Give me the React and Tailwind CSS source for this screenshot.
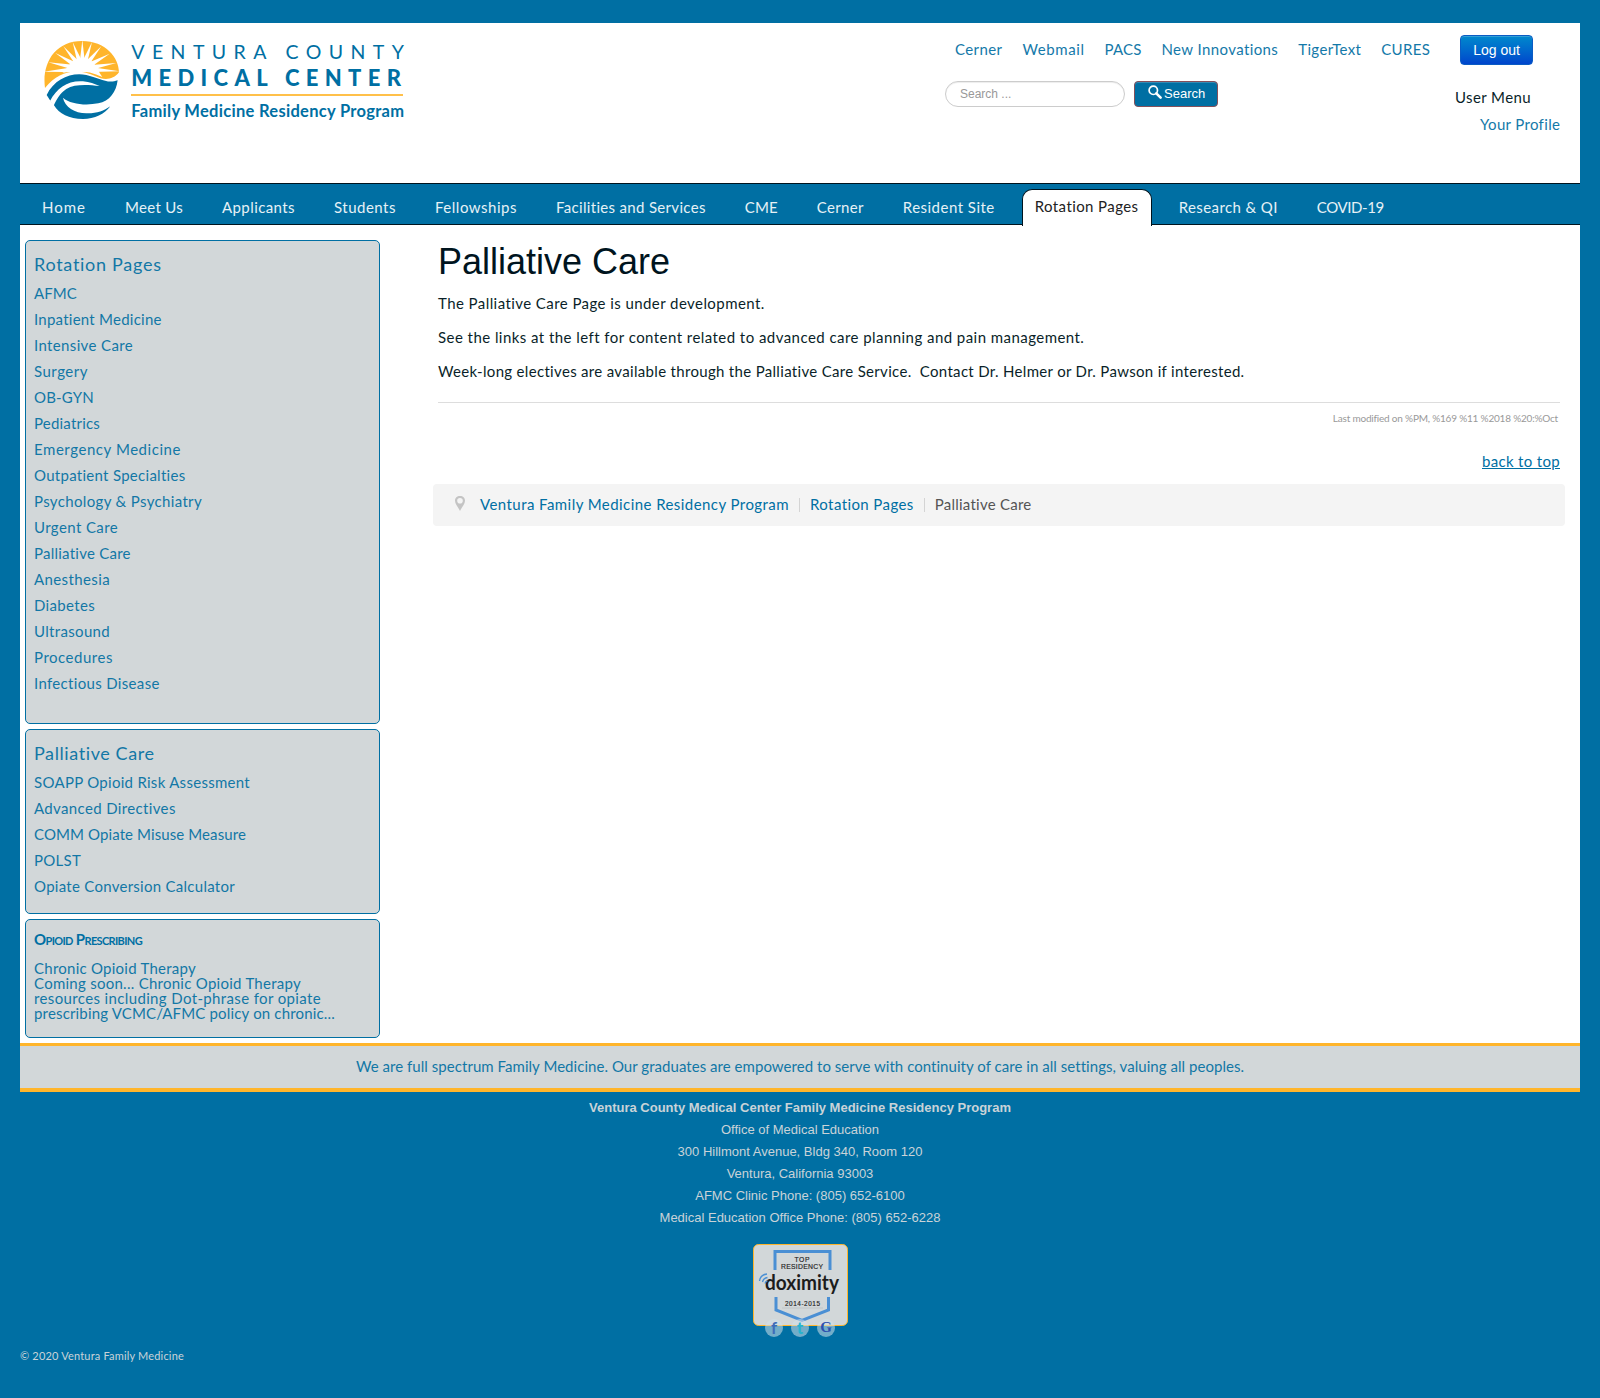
import React, { useLayoutEffect, useRef, useState } from "react";

/* A single line of text tracked so that it spans exactly `w` pixels. */
function Fit({ w, children, className = "" }) {
  const ref = useRef(null);
  const [spacing, setSpacing] = useState(0);
  useLayoutEffect(() => {
    const natural = ref.current.getBoundingClientRect().width;
    setSpacing((w - natural) / children.length);
  }, []);
  return (
    <span
      ref={ref}
      className={"inline-block whitespace-pre " + className}
      style={{ letterSpacing: spacing + "px" }}
    >
      {children}
    </span>
  );
}

const quickLinks = [
  ["Cerner", 47.5],
  ["Webmail", 62],
  ["PACS", 37],
  ["New Innovations", 117],
  ["TigerText", 63],
  ["CURES", 49],
];

const navBefore = [
  ["Home", 44],
  ["Meet Us", 58],
  ["Applicants", 73],
  ["Students", 62],
  ["Fellowships", 82],
  ["Facilities and Services", 150],
  ["CME", 33],
  ["Cerner", 47],
  ["Resident Site", 92],
];
const navAfter = [
  ["Research & QI", 99],
  ["COVID-19", 67],
];

const rotationLinks = [
  ["AFMC", 43],
  ["Inpatient Medicine", 128],
  ["Intensive Care", 99],
  ["Surgery", 54],
  ["OB-GYN", 60],
  ["Pediatrics", 66],
  ["Emergency Medicine", 147],
  ["Outpatient Specialties", 152],
  ["Psychology & Psychiatry", 168],
  ["Urgent Care", 84],
  ["Palliative Care", 97],
  ["Anesthesia", 76],
  ["Diabetes", 61],
  ["Ultrasound", 76],
  ["Procedures", 79],
  ["Infectious Disease", 126],
];

const palliativeLinks = [
  ["SOAPP Opioid Risk Assessment", 216],
  ["Advanced Directives", 142],
  ["COMM Opiate Misuse Measure", 212],
  ["POLST", 47],
  ["Opiate Conversion Calculator", 201],
];

const address = [
  "Office of Medical Education",
  "300 Hillmont Avenue, Bldg 340, Room 120",
  "Ventura, California 93003",
  "AFMC Clinic Phone: (805) 652-6100",
  "Medical Education Office Phone: (805) 652-6228",
];

/* Outer tips of the sun's rays. */
const rayTips = [
  [132, 214], [146, 186], [167, 158], [191, 138], [219, 125], [248, 119],
  [277, 125], [305, 138], [330, 160], [350, 188], [360, 213],
];

function SunLogo() {
  const cx = 248;
  const cy = 206;
  return (
    <svg viewBox="130 119 232 242" className="h-[80.7px] w-[77.3px] shrink-0">
      <path
        d="M136 263 C126 190 165 122 247 122 C318 122 358 172 358 216 C340 240 312 240 288 228 C235 203 180 208 136 263 Z"
        fill="#ffb52b"
      />
      {rayTips.map(([x, y]) => {
        const len = Math.hypot(x - cx, y - cy);
        const px = (-(y - cy) / len) * 10;
        const py = ((x - cx) / len) * 10;
        return (
          <path
            key={x}
            d={`M${x} ${y} L${cx + px} ${cy + py} L${cx - px} ${cy - py} Z`}
            fill="#fff"
          />
        );
      })}
      <path d="M196 213 C210 184 232 174 250 174 C270 174 288 188 300 218 L308 230 C270 212 230 206 188 218 Z" fill="#fff" />
      <path
        d="M141 284 C165 235 215 215 260 224 C298 232 322 252 354 240 C350 275 330 303 296 309 C258 316 212 312 190 292 C195 320 225 338 260 339 C290 340 312 332 332 318 C315 342 285 356 250 356 C208 356 178 340 163 315 L152 301 Z"
        fill="#006fa3"
      />
      <path
        d="M151 302 C172 262 205 240 250 243 C270 245 285 251 300 257 C265 253 225 250 200 266 C181 279 170 298 162 316 Z"
        fill="#fff"
      />
    </svg>
  );
}

function Logo() {
  return (
    <div className="ml-[23px] mt-[17px] flex h-[90px] gap-[11px] text-[#006fa3]">
      <SunLogo />
      <div className="flex flex-col items-start whitespace-nowrap">
        <Fit w={280} className="h-6 text-[19.5px] font-normal leading-6">VENTURA COUNTY</Fit>
        <Fit w={276} className="mt-[2px] h-6 text-[22px] font-black leading-6">MEDICAL CENTER</Fit>
        <div className="mt-[4px] h-[2px] w-[272px] bg-[#ffc04a]" />
        <Fit w={273} className="mt-[5px] h-5 text-[16.5px] font-bold leading-5">
          Family Medicine Residency Program
        </Fit>
      </div>
    </div>
  );
}

function Header() {
  return (
    <header className="flex h-[160px] justify-between bg-white">
      <Logo />
      <div className="flex">
        <div className="w-[515px]">
          <div className="mt-[14px] flex h-6 gap-5 pl-[10px] leading-6 text-[#1479a9]">
            {quickLinks.map(([t, w]) => (
              <Fit key={t} w={w}>{t}</Fit>
            ))}
          </div>
          <div className="mt-5 flex gap-[9px] font-['Liberation_Sans',sans-serif]">
            <div className="h-[26px] w-[180px] rounded-full border border-[#ccc] pl-[14px] text-xs leading-6 text-[#999] shadow-[inset_0_1px_1px_rgba(0,0,0,0.075)]">
              Search ...
            </div>
            <div className="flex h-[26px] w-[84px] items-center rounded border border-[#85505a] bg-[#006fa3] pl-[13px] text-[13px] leading-6 text-white shadow-[inset_0_1px_0_rgba(255,255,255,0.2)]">
              <svg viewBox="0 0 14 14" className="-mt-1 mr-[2px] size-[14px]" fill="none" stroke="#fff">
                <circle cx="5.3" cy="5.3" r="4.2" strokeWidth="1.7" />
                <path d="M8.3 8.3 L12.6 12.6" strokeWidth="2.6" strokeLinecap="round" />
              </svg>
              Search
            </div>
          </div>
        </div>
        <div className="flex w-[120px] flex-col items-start">
          <div className="mt-3 h-[30px] w-[73px] rounded border border-[#0a5cc4] bg-gradient-to-b from-[#0088cc] to-[#0044cc] text-center font-['Liberation_Sans',sans-serif] text-sm leading-7 text-white shadow-[inset_0_1px_0_rgba(255,255,255,0.2)]">
            Log out
          </div>
          <Fit w={76} className="-ml-[5px] mt-5 h-6 leading-6 text-[#0a1f29]">User Menu</Fit>
          <Fit w={80} className="ml-5 mt-[3px] h-6 leading-6 text-[#1479a9]">Your Profile</Fit>
        </div>
      </div>
    </header>
  );
}

function Nav() {
  return (
    <nav className="flex h-[42px] border-y border-[#00141e] bg-[#006fa3] pl-[22px] text-[#e6f1f6]">
      <div className="mt-[11px] flex h-6 gap-[39px] leading-6">
        {navBefore.map(([t, w]) => (
          <Fit key={t} w={w}>{t}</Fit>
        ))}
      </div>
      <div className="relative z-10 ml-[27px] mt-[5px] h-[37px] w-[130px] rounded-t-[10px] border border-b-0 border-[#00141e] bg-white pl-3 pt-[4px] leading-6 text-[#222]">
        <Fit w={104}>Rotation Pages</Fit>
      </div>
      <div className="ml-[27px] mt-[11px] flex h-6 gap-[39px] leading-6">
        {navAfter.map(([t, w]) => (
          <Fit key={t} w={w}>{t}</Fit>
        ))}
      </div>
    </nav>
  );
}

function MenuPanel({ title, titleWidth, links, className }) {
  return (
    <section className={"rounded-[5px] border border-[#006fa3] bg-[#d2d7d9] pl-2 " + className}>
      <h3 className="mt-[11px] h-6 text-lg leading-6">
        <Fit w={titleWidth}>{title}</Fit>
      </h3>
      <ul className="mt-[4px]">
        {links.map(([t, w]) => (
          <li key={t} className="h-[26px] leading-[26px]">
            <Fit w={w}>{t}</Fit>
          </li>
        ))}
      </ul>
    </section>
  );
}

function Sidebar() {
  return (
    <aside className="flex w-[355px] flex-col gap-[5px] text-[#1277a6]">
      <MenuPanel title="Rotation Pages" titleWidth={128} links={rotationLinks} className="h-[484px]" />
      <MenuPanel title="Palliative Care" titleWidth={121} links={palliativeLinks} className="h-[185px]" />
      <section className="h-[119px] rounded-[5px] border border-[#006fa3] bg-[#d2d7d9] pl-2">
        <h3 className="mt-[7px] h-6 font-bold leading-6 text-[#006fa3] [font-variant:small-caps]">
          <Fit w={108}>Opioid Prescribing</Fit>
        </h3>
        <div className="mt-[10px] flex flex-col items-start leading-[15px]">
          <Fit w={162}>Chronic Opioid Therapy</Fit>
          <Fit w={267}>Coming soon... Chronic Opioid Therapy</Fit>
          <Fit w={287}>resources including Dot-phrase for opiate</Fit>
          <Fit w={301}>prescribing VCMC/AFMC policy on chronic...</Fit>
        </div>
      </section>
    </aside>
  );
}

function Content() {
  return (
    <main className="w-[1132px]">
      <div className="px-[5px]">
        <h1 className="mt-px h-[42px] font-['Liberation_Sans',sans-serif] text-[36px] leading-[42px] text-[#00141e]">
          Palliative Care
        </h1>
        <div className="mt-[8px] flex flex-col items-start gap-[10px] leading-6 text-[#0a1f29]">
          <Fit w={327}>The Palliative Care Page is under development.</Fit>
          <Fit w={646}>See the links at the left for content related to advanced care planning and pain management.</Fit>
          <Fit w={807}>{"Week-long electives are available through the Palliative Care Service.\u00a0 Contact Dr. Helmer or Dr. Pawson if interested."}</Fit>
        </div>
        <div className="mt-[19px] h-px bg-[#ddd]" />
        <div className="mt-[7px] h-4 pr-[2px] text-right text-[10px] leading-4 text-[#999]">
          <Fit w={225}>Last modified on %PM, %169 %11 %2018 %20:%Oct</Fit>
        </div>
        <div className="mt-[23px] h-6 text-right leading-6 text-[#006fa3]">
          <Fit w={78} className="underline">back to top</Fit>
        </div>
      </div>
      <div className="mt-[11px] flex h-[42px] items-center rounded bg-[#f4f4f4] pl-[22px] text-[#006fa3]">
        <svg viewBox="0 0 10 15" className="-mt-[3px] mr-[15px] h-[15px] w-[10px]">
          <path
            fillRule="evenodd"
            fill="#c4c4c4"
            d="M5 0 C2 0 0 2 0 4.8 C0 8 3.2 11 5 15 C6.8 11 10 8 10 4.8 C10 2 8 0 5 0 Z M5 2 A2.8 2.8 0 1 1 5 7.6 A2.8 2.8 0 1 1 5 2 Z"
          />
        </svg>
        <Fit w={309} className="-mt-[2px]">Ventura Family Medicine Residency Program</Fit>
        <span className="mx-[10px] h-[14px] w-px bg-[#d4d4d4]" />
        <Fit w={104} className="-mt-[2px]">Rotation Pages</Fit>
        <span className="mx-[10px] h-[14px] w-px bg-[#d4d4d4]" />
        <Fit w={97} className="-mt-[2px] text-[#555]">Palliative Care</Fit>
      </div>
    </main>
  );
}

function Doximity() {
  return (
    <svg viewBox="0 0 95 82" className="h-[82px] w-[95px]">
      <rect x="0.5" y="0.5" width="94" height="81" rx="5" fill="#d2d7d9" stroke="#ffb52b" />
      <path d="M22 26 V7.5 H77 V26" fill="none" stroke="#4a8fd4" strokeWidth="3" />
      <path d="M23 53 V66 L49 76.5 L75.500 66 V53" fill="none" stroke="#4a8fd4" strokeWidth="3" />
      <g fontFamily="Liberation Sans, sans-serif" fill="#222" stroke="#222" strokeWidth="0.15" textAnchor="middle">
        <text x="49" y="17.500" fontSize="6.800" textLength="15">TOP</text>
        <text x="49" y="25" fontSize="6.800" textLength="42">RESIDENCY</text>
        <text x="49.500" y="62" fontSize="6.400" textLength="35">2014-2015</text>
      </g>
      <path d="M29 64 H70" stroke="#b5babc" strokeWidth="0.600" />
      <text x="12" y="46" fontFamily="Lato, sans-serif" fontSize="20" fontWeight="700" fill="#1c1c1c" textLength="74" lengthAdjust="spacingAndGlyphs">
        doximity
      </text>
      <path d="M6.500 37 C7 33 9.500 30.500 14 30 M9.500 38 C10 35.500 11.500 34 14.500 33.500 M12 39.500 C12.300 38 13 37 14.500 36.800" fill="none" stroke="#4a8fd4" strokeWidth="1.300" />
    </svg>
  );
}

function Footer() {
  return (
    <footer className="text-center font-['Liberation_Sans',sans-serif] text-[13px] leading-[22px] text-[#c9d3d8]">
      <div className="mt-[5px] font-bold">Ventura County Medical Center Family Medicine Residency Program</div>
      {address.map((line) => (
        <div key={line}>{line}</div>
      ))}
      <div className="mt-[15px] flex justify-center pl-px">
        <Doximity />
      </div>
      <div className="relative -mt-[7px] flex justify-center gap-2 font-['Liberation_Serif',serif] leading-[17px]">
        <span className="size-[18px] rounded-full bg-[#d2e0ea]/55 text-center font-['Lato',sans-serif] text-[17px] font-bold text-[#3e6cb8]">f</span>
        <span className="size-[18px] rounded-full bg-[#d2e0ea]/55 text-center font-['Lato',sans-serif] text-[17px] font-black text-[#27b3cf]">t</span>
        <span className="size-[18px] rounded-full bg-[#d2e0ea]/55 text-center text-[15px] font-bold text-[#2c4fae]">G</span>
      </div>
      <div className="mt-[9px] h-5 text-left font-['Lato',sans-serif] text-[11px] leading-5">
        <Fit w={164}>© 2020 Ventura Family Medicine</Fit>
      </div>
    </footer>
  );
}

export default function App() {
  return (
    <div className="h-[1398px] bg-[#006fa3] px-5 pt-[23px] font-['Lato',sans-serif] text-[15px]">
      <Header />
      <Nav />
      <div className="flex h-[818px] gap-[53px] bg-white pl-[5px] pt-[15px]">
        <Sidebar />
        <Content />
      </div>
      <div className="h-[49px] border-b-4 border-t-[3px] border-[#ffb52b] bg-[#d2d7d9] text-center leading-[41px] text-[#1277a6]">
        <Fit w={888}>We are full spectrum Family Medicine. Our graduates are empowered to serve with continuity of care in all settings, valuing all peoples.</Fit>
      </div>
      <Footer />
    </div>
  );
}
